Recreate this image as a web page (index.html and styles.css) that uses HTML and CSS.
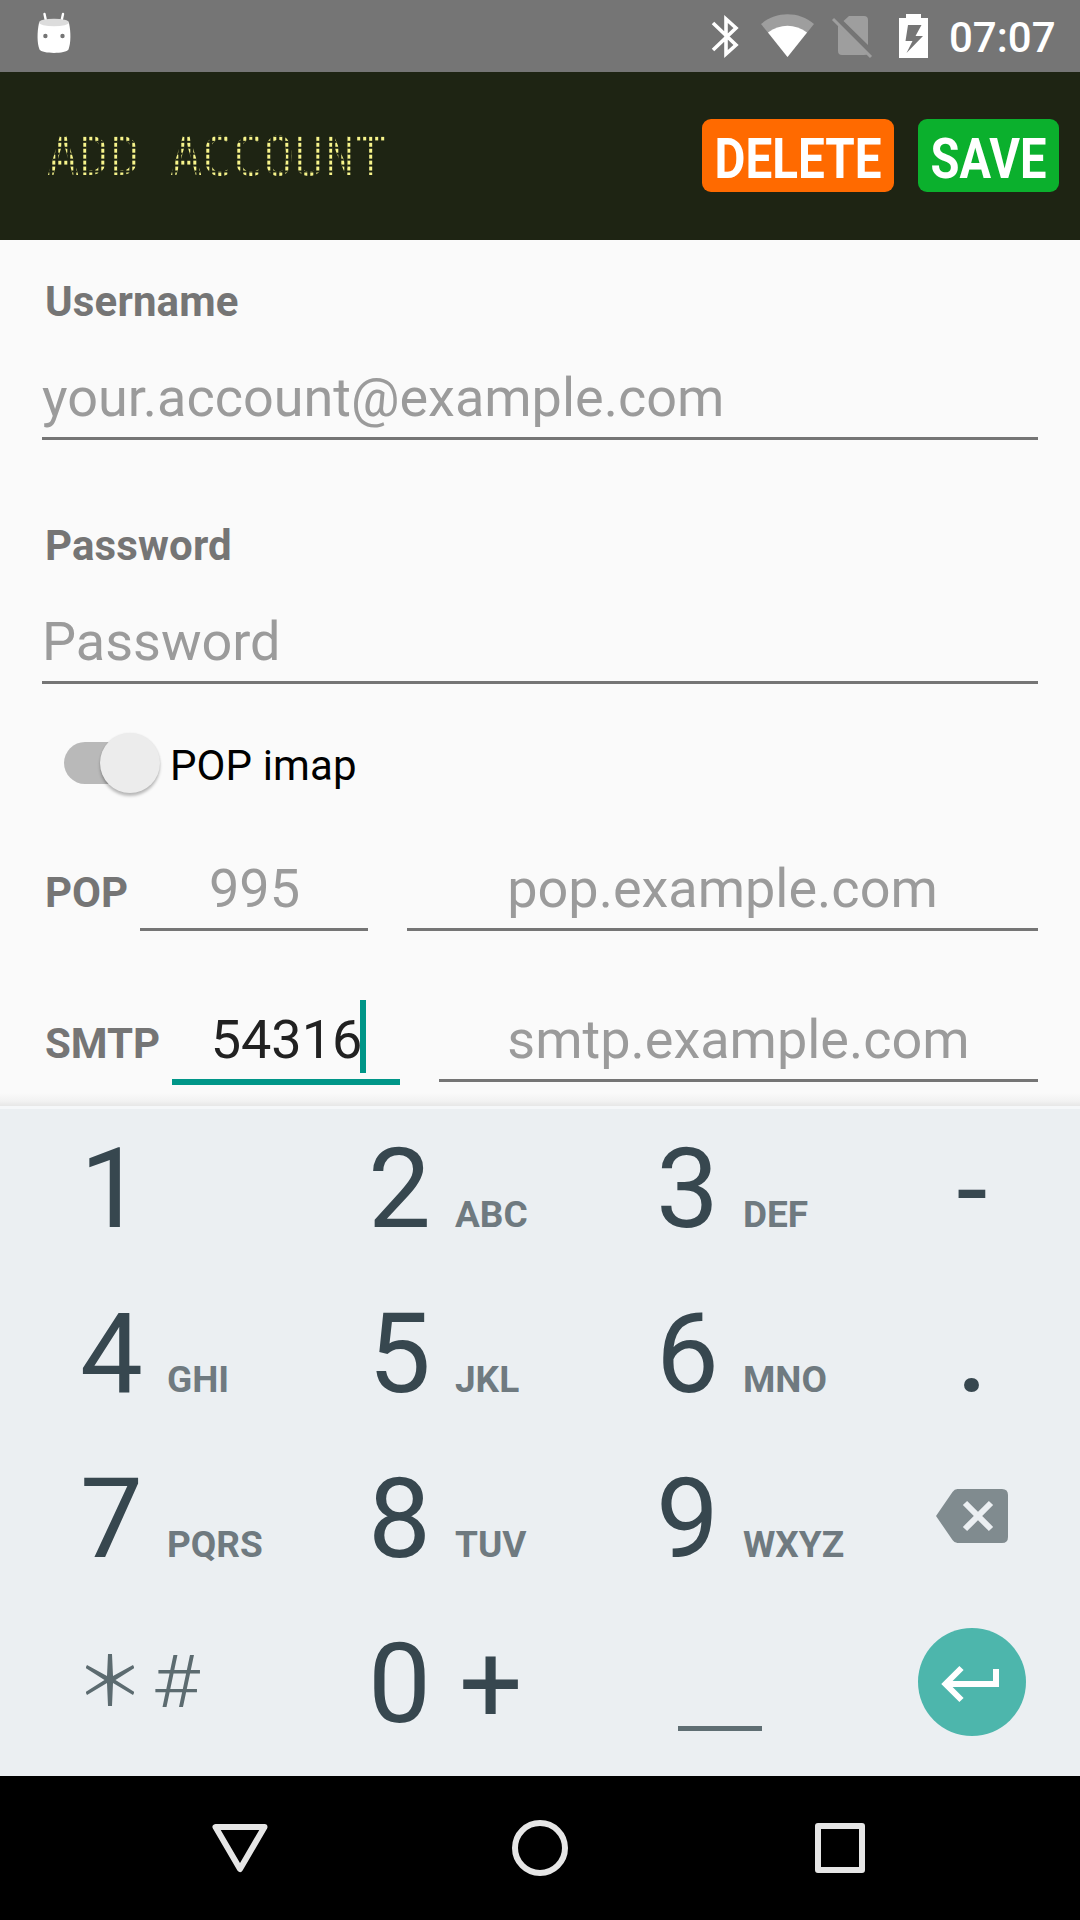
FILE: index.html
```html
<!DOCTYPE html>
<html lang="en">
<head>
<meta charset="utf-8">
<title>Add account</title>
<link rel="stylesheet" href="styles.css">
</head>
<body>
<div class="statusbar">
  <svg class="droid" width="36" height="42" viewBox="36 12 36 42">
    <path d="M44.500 14 46 21M63 14 61.500 21" stroke="#fff" stroke-width="2.4" stroke-linecap="round"/>
    <path fill="#fff" fill-rule="evenodd" d="M39 23C37 32 37 43 39.500 49.500C42 54 66 54 68.500 49.500C71 43 71 32 69 23ZM45.400 33.800a2.200 2.200 0 1 1 0 4.400a2.200 2.200 0 1 1 0-4.400ZM62.500 33.800a2.200 2.200 0 1 1 0 4.400a2.200 2.200 0 1 1 0-4.400Z"/>
    <ellipse cx="54" cy="22.500" rx="15" ry="3.800" fill="#dcdcdc"/>
  </svg>
  <svg class="indicators" width="220" height="48" viewBox="710 12 220 48">
    <path d="M713 23 736 45 726 54V19L736 28 713 50" fill="none" stroke="#fff" stroke-width="3.600"/>
    <path fill="#9e9e9e" d="M761 24C776 11 799 11 814 24L787.500 57Z"/>
    <path fill="#fff" d="M768 32.500C780 23.500 795 23.500 807 32.500L787.500 57Z"/>
    <path fill="#9e9e9e" d="M849 16H864Q868 16 868 20V45L843.500 21ZM838 25.500 867.500 54Q867 55 864 55H842Q838 55 838 51Z"/>
    <path d="M833 19 871 57" stroke="#9e9e9e" stroke-width="3"/>
    <path fill="#fff" fill-rule="evenodd" d="M899 18H906V14H921V18H928V58H899ZM908 25 905.500 41H912.500L906.500 53 923 36H915.500L921.500 25Z"/>
  </svg>
  <span class="clock">07:07</span>
</div>

<header class="appbar">
  <h1 class="title"><span>A</span><span>D</span><span>D</span> <span>A</span><span>C</span><span>C</span><span>O</span><span>U</span><span>N</span><span class="mid-stem">T</span></h1>
  <div class="actions">
    <button class="btn btn-delete"><svg width="192" height="73"><text class="btn-text" x="12.500" y="58.500" textLength="167" lengthAdjust="spacingAndGlyphs">DELETE</text></svg></button>
    <button class="btn btn-save"><svg width="141" height="73"><text class="btn-text" x="12.500" y="58.500" textLength="116" lengthAdjust="spacingAndGlyphs">SAVE</text></svg></button>
  </div>
</header>

<main class="form">
  <div class="label">Username</div>
  <div class="field field-wide">your.account@example.com</div>
  <div class="label label-second">Password</div>
  <div class="field field-wide">Password</div>
  <div class="switch-row">
    <div class="track"><div class="thumb"></div></div>
    <span class="switch-text">POP imap</span>
  </div>
  <div class="server server-pop">
    <div class="label server-label">POP</div>
    <div class="field port">995</div>
    <div class="field host">pop.example.com</div>
  </div>
  <div class="server server-smtp">
    <div class="label server-label">SMTP</div>
    <div class="field port focused"><span class="value">54316<i class="caret"></i></span></div>
    <div class="field host">smtp.example.com</div>
  </div>
  <div class="shade"></div>
</main>

<section class="keyboard">
  <div class="key"><b>1</b></div>
  <div class="key"><b>2</b><small>ABC</small></div>
  <div class="key"><b>3</b><small>DEF</small></div>
  <div class="key side dash">-</div>
  <div class="key"><b>4</b><small>GHI</small></div>
  <div class="key"><b>5</b><small>JKL</small></div>
  <div class="key"><b>6</b><small>MNO</small></div>
  <div class="key side">.</div>
  <div class="key"><b>7</b><small>PQRS</small></div>
  <div class="key"><b>8</b><small>TUV</small></div>
  <div class="key"><b>9</b><small>WXYZ</small></div>
  <div class="key icon-key">
    <svg width="72" height="54" viewBox="0 0 72 54">
      <path fill="#808b8f" d="M0 27 16.500 3Q18.500 0 21.500 0H66Q72 0 72 6V48Q72 54 66 54H21.500Q18.500 54 16.500 51Z"/>
      <path d="M29 14 55 40M55 14 29 40" stroke="#ebeff2" stroke-width="6"/>
    </svg>
  </div>
  <div class="key symbols">
    <svg width="48" height="54" viewBox="86 1653 48 54" aria-label="*">
      <path fill="#5c6b70" d="M108 1654h4l1 22 20 -11 1.500 3-19 12 19 12-1.500 3-20-12-1 23h-4l-1-23-20 12-1.500-3 19-12-19-12 1.500-3 20 11z"/>
    </svg>
    <span class="hash">#</span>
  </div>
  <div class="key"><b>0</b><b class="plus">+</b></div>
  <div class="key space-key"><div class="space"></div></div>
  <div class="key icon-key enter-key">
    <svg width="108" height="108" viewBox="0 0 108 108">
      <circle cx="54" cy="54" r="54" fill="#4db6ac"/>
      <path d="M78 41V56H28M43.500 40 27.500 56 43.500 72" fill="none" stroke="#fff" stroke-width="6"/>
    </svg>
  </div>
</section>

<nav class="navbar">
  <svg width="60" height="60" viewBox="0 0 60 60"><path d="M5.500 9H54.500L30 51Z"/></svg>
  <svg width="60" height="60" viewBox="0 0 60 60"><circle cx="30" cy="30" r="25"/></svg>
  <svg width="60" height="60" viewBox="0 0 60 60"><rect x="8" y="8" width="44" height="44"/></svg>
</nav>
</body>
</html>
```
FILE: styles.css
```css
* { box-sizing: border-box; }
body {
  margin: 0;
  width: 1080px;
  height: 1920px;
  overflow: hidden;
  background: #fafafa;
  font-family: Roboto, sans-serif;
}
svg { display: block; flex: none; }

.statusbar {
  height: 72px;
  background: #757575;
  display: flex;
  align-items: flex-start;
  padding: 12px 24px 0 36px;
}
.indicators { margin-left: auto; }
.clock {
  width: 107px;
  margin-left: 19px;
  color: #fff;
  font-size: 42px;
  font-weight: 500;
  line-height: 51px;
}

.appbar {
  height: 168px;
  background: #1e2413;
  display: flex;
  align-items: center;
  justify-content: space-between;
  padding: 0 21px 0 47px;
}
.title {
  margin: 2px 0 0;
  font: 400 53.500px/64px "DejaVu Sans Mono", monospace;
  letter-spacing: -1.460px;
}
/* Dot-matrix lettering: a 6px dot grid clipped to each character. */
.title span {
  display: inline-block;
  width: 30.750px;
  color: transparent;
  background:
    linear-gradient(transparent 3.500px, #1e2413 3.500px) 0 0 / 100% 5.950px,
    linear-gradient(90deg, #f7f48b 3.500px, #1e2413 3.500px) 5.300px 0 / 6px 100%;
  -webkit-background-clip: text;
  background-clip: text;
}
.title .mid-stem { background-position: 0 0, 2.200px 0; }
.actions { display: flex; gap: 24px; padding-bottom: 1px; }
.btn { border: 0; padding: 0; height: 73px; border-radius: 9px; }
.btn svg { overflow: visible; }
.btn-delete { background: #ff6a00; }
.btn-save { background: #0bb02d; }
.btn-text { font: 700 55px Roboto, sans-serif; fill: #fff; }

.form {
  height: 866px;
  padding: 37px 42px 0;
  position: relative;
}
.label {
  padding-left: 3px;
  color: #757575;
  font-size: 42px;
  font-weight: 700;
  letter-spacing: .150px;
  line-height: 50px;
}
.label-second { margin-top: 81px; }
.field {
  height: 74px;
  border-bottom: 3px solid #757575;
  color: #9b9b9b;
  font-size: 54px;
  line-height: 64px;
  white-space: nowrap;
}
.field-wide { margin-top: 39px; }
.switch-row {
  display: flex;
  height: 60px;
  margin: 49px 0 0 22px;
}
.track {
  width: 96px;
  height: 42px;
  margin-top: 9px;
  display: flex;
  justify-content: flex-end;
  align-items: center;
  background: linear-gradient(90deg, #b9b9b9 70px, transparent 70px);
  border-radius: 21px;
}
.thumb {
  flex: none;
  width: 60px;
  height: 60px;
  border-radius: 50%;
  background: #ececec;
  box-shadow: 0 3px 3px rgba(0, 0, 0, .25), 0 0 2px rgba(0, 0, 0, .08);
}
.switch-text { margin-left: 10px; font-size: 42px; letter-spacing: .100px; line-height: 65px; color: #000; }
.server { display: flex; align-items: baseline; height: 74px; }
.server-pop { margin-top: 64px; }
.server-smtp { margin-top: 77px; }
.server-label { width: 98px; letter-spacing: 0; }
.server-smtp .server-label { width: 130px; }
.port { width: 228px; text-align: center; margin-right: 39px; padding-left: 1px; }
.host { flex: 1; text-align: center; }
.focused { height: 77px; border-bottom: 6px solid #009688; color: #212121; }
.value { position: relative; }
.caret {
  position: absolute;
  left: calc(100% - 2px);
  top: -8px;
  width: 6px;
  height: 73px;
  background: #009688;
}
.shade {
  position: absolute;
  left: 0;
  right: 0;
  bottom: 0;
  height: 13px;
  background: linear-gradient(rgba(0, 0, 0, 0), rgba(0, 0, 0, .03) 60%, rgba(0, 0, 0, .08));
}

.keyboard {
  height: 670px;
  background: linear-gradient(#f5f7f9 3px, #ebeff2 3px);
  display: grid;
  grid-template-columns: 288px 288px 288px 216px;
  grid-template-rows: repeat(4, 165px);
  color: #37474f;
}
.key {
  display: flex;
  align-items: baseline;
  padding-left: 80px;
  font-size: 112px;
  line-height: 165px;
}
.key b { font-weight: 400; }
.key small {
  margin-left: 24px;
  font-size: 37px;
  font-weight: 700;
  color: #6f7a80;
}
.side { padding: 0; justify-content: center; font-size: 108px; font-weight: 500; line-height: 167px; }
.dash { font-size: 112px; font-weight: 400; line-height: 168px; }
.icon-key { padding: 0 0 6px; justify-content: center; align-items: center; }
.enter-key { padding: 0 0 3px; }
.symbols { padding-left: 86px; align-items: flex-start; line-height: 1; }
.symbols svg { margin-top: 52px; }
.hash {
  margin-left: 18px;
  padding-top: 44px;
  font-size: 73px;
  font-weight: 300;
  line-height: 75px;
  color: #5c6b70;
  transform: scaleX(1.120);
  transform-origin: left;
}
.plus { margin-left: 28px; }
.space-key { padding: 125px 0 0 102px; align-items: flex-start; }
.space { width: 84px; height: 5px; background: #5f6e73; }

.navbar {
  height: 144px;
  background: #000;
  display: flex;
  justify-content: center;
  align-items: center;
  gap: 240px;
}
.navbar svg { fill: none; stroke: #e6e6e6; stroke-width: 6; stroke-linejoin: round; }
```
